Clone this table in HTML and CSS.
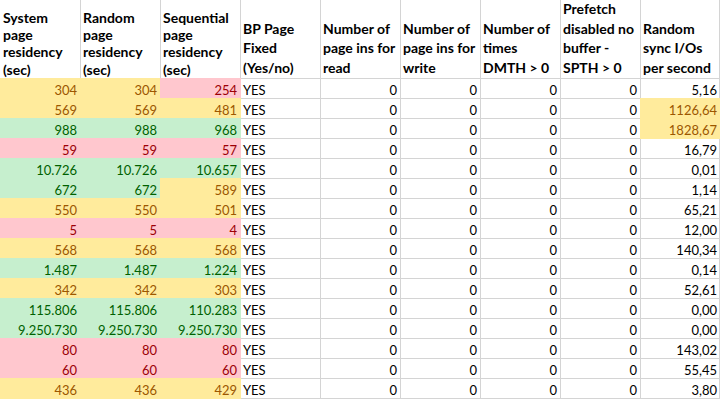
FILE: index.html
```html
<!DOCTYPE html>
<html>
<head>
<meta charset="utf-8">
<link rel="stylesheet" href="styles.css">
</head>
<body>
<div class="sheet">
  <div class="c h tight"><span>System<br>page<br>residency<br>(sec)</span></div>
  <div class="c h tight"><span>Random<br>page<br>residency<br>(sec)</span></div>
  <div class="c h tight"><span>Sequential<br>page<br>residency<br>(sec)</span></div>
  <div class="c h"><span>BP Page<br>Fixed<br>(Yes/no)</span></div>
  <div class="c h"><span>Number of<br>page ins for<br>read</span></div>
  <div class="c h"><span>Number of<br>page ins for<br>write</span></div>
  <div class="c h"><span>Number of<br>times<br>DMTH &gt; 0</span></div>
  <div class="c h"><span>Prefetch<br>disabled no<br>buffer -<br>SPTH &gt; 0</span></div>
  <div class="c h"><span>Random<br>sync I/Os<br>per second</span></div>

  <div class="c n y">304</div><div class="c n y">304</div><div class="c n r">254</div><div class="c t">YES</div><div class="c n">0</div><div class="c n">0</div><div class="c n">0</div><div class="c n">0</div><div class="c n last">5,16</div>
  <div class="c n y">569</div><div class="c n y">569</div><div class="c n y">481</div><div class="c t">YES</div><div class="c n">0</div><div class="c n">0</div><div class="c n">0</div><div class="c n">0</div><div class="c n last y">1126,64</div>
  <div class="c n g">988</div><div class="c n g">988</div><div class="c n g">968</div><div class="c t">YES</div><div class="c n">0</div><div class="c n">0</div><div class="c n">0</div><div class="c n">0</div><div class="c n last y">1828,67</div>
  <div class="c n r">59</div><div class="c n r">59</div><div class="c n r">57</div><div class="c t">YES</div><div class="c n">0</div><div class="c n">0</div><div class="c n">0</div><div class="c n">0</div><div class="c n last">16,79</div>
  <div class="c n g">10.726</div><div class="c n g">10.726</div><div class="c n g">10.657</div><div class="c t">YES</div><div class="c n">0</div><div class="c n">0</div><div class="c n">0</div><div class="c n">0</div><div class="c n last">0,01</div>
  <div class="c n g">672</div><div class="c n g">672</div><div class="c n y">589</div><div class="c t">YES</div><div class="c n">0</div><div class="c n">0</div><div class="c n">0</div><div class="c n">0</div><div class="c n last">1,14</div>
  <div class="c n y">550</div><div class="c n y">550</div><div class="c n y">501</div><div class="c t">YES</div><div class="c n">0</div><div class="c n">0</div><div class="c n">0</div><div class="c n">0</div><div class="c n last">65,21</div>
  <div class="c n r">5</div><div class="c n r">5</div><div class="c n r">4</div><div class="c t">YES</div><div class="c n">0</div><div class="c n">0</div><div class="c n">0</div><div class="c n">0</div><div class="c n last">12,00</div>
  <div class="c n y">568</div><div class="c n y">568</div><div class="c n y">568</div><div class="c t">YES</div><div class="c n">0</div><div class="c n">0</div><div class="c n">0</div><div class="c n">0</div><div class="c n last">140,34</div>
  <div class="c n g">1.487</div><div class="c n g">1.487</div><div class="c n g">1.224</div><div class="c t">YES</div><div class="c n">0</div><div class="c n">0</div><div class="c n">0</div><div class="c n">0</div><div class="c n last">0,14</div>
  <div class="c n y">342</div><div class="c n y">342</div><div class="c n y">303</div><div class="c t">YES</div><div class="c n">0</div><div class="c n">0</div><div class="c n">0</div><div class="c n">0</div><div class="c n last">52,61</div>
  <div class="c n g">115.806</div><div class="c n g">115.806</div><div class="c n g">110.283</div><div class="c t">YES</div><div class="c n">0</div><div class="c n">0</div><div class="c n">0</div><div class="c n">0</div><div class="c n last">0,00</div>
  <div class="c n g">9.250.730</div><div class="c n g">9.250.730</div><div class="c n g">9.250.730</div><div class="c t">YES</div><div class="c n">0</div><div class="c n">0</div><div class="c n">0</div><div class="c n">0</div><div class="c n last">0,00</div>
  <div class="c n r">80</div><div class="c n r">80</div><div class="c n r">80</div><div class="c t">YES</div><div class="c n">0</div><div class="c n">0</div><div class="c n">0</div><div class="c n">0</div><div class="c n last">143,02</div>
  <div class="c n r">60</div><div class="c n r">60</div><div class="c n r">60</div><div class="c t">YES</div><div class="c n">0</div><div class="c n">0</div><div class="c n">0</div><div class="c n">0</div><div class="c n last">55,45</div>
  <div class="c n y">436</div><div class="c n y">436</div><div class="c n y">429</div><div class="c t">YES</div><div class="c n">0</div><div class="c n">0</div><div class="c n">0</div><div class="c n">0</div><div class="c n last">3,80</div>
</div>
</body>
</html>
```

FILE: styles.css
```css
html, body {
  margin: 0;
  padding: 0;
  background: #ffffff;
}

.sheet {
  display: grid;
  grid-template-columns: repeat(8, 80px) 79px;
  grid-template-rows: 79px repeat(16, 20px);
  margin-left: 1px;
  font-family: Lato, "Open Sans", sans-serif;
  font-size: 13px;
  color: #000000;
}

.c {
  box-sizing: border-box;
  border-right: 1px solid #d4d4d4;
  border-bottom: 1px solid #d4d4d4;
  white-space: nowrap;
  overflow: visible;
}

.h {
  display: flex;
  align-items: flex-end;
  font-weight: 700;
  font-size: 14px;
  padding-left: 2px;
  line-height: 19.8px;
}

.h.tight {
  line-height: 17.3px;
}

.n {
  text-align: right;
  padding: 2.5px 3px 0 0;
  line-height: 17.5px;
}

.n.last {
  padding-right: 2px;
}

.t {
  padding: 2.5px 0 0 2px;
  line-height: 17.5px;
}

.y {
  background: #ffeb9c;
  color: #9c5700;
  border-color: #ffeb9c;
  box-shadow: -1px 0 0 #ffeb9c, 0 -1px 0 #ffeb9c, -1px -1px 0 #ffeb9c;
}

.r {
  background: #ffc7ce;
  color: #9c0006;
  border-color: #ffc7ce;
  box-shadow: -1px 0 0 #ffc7ce, 0 -1px 0 #ffc7ce, -1px -1px 0 #ffc7ce;
}

.g {
  background: #c6efce;
  color: #006100;
  border-color: #c6efce;
  box-shadow: -1px 0 0 #c6efce, 0 -1px 0 #c6efce, -1px -1px 0 #c6efce;
}
```
